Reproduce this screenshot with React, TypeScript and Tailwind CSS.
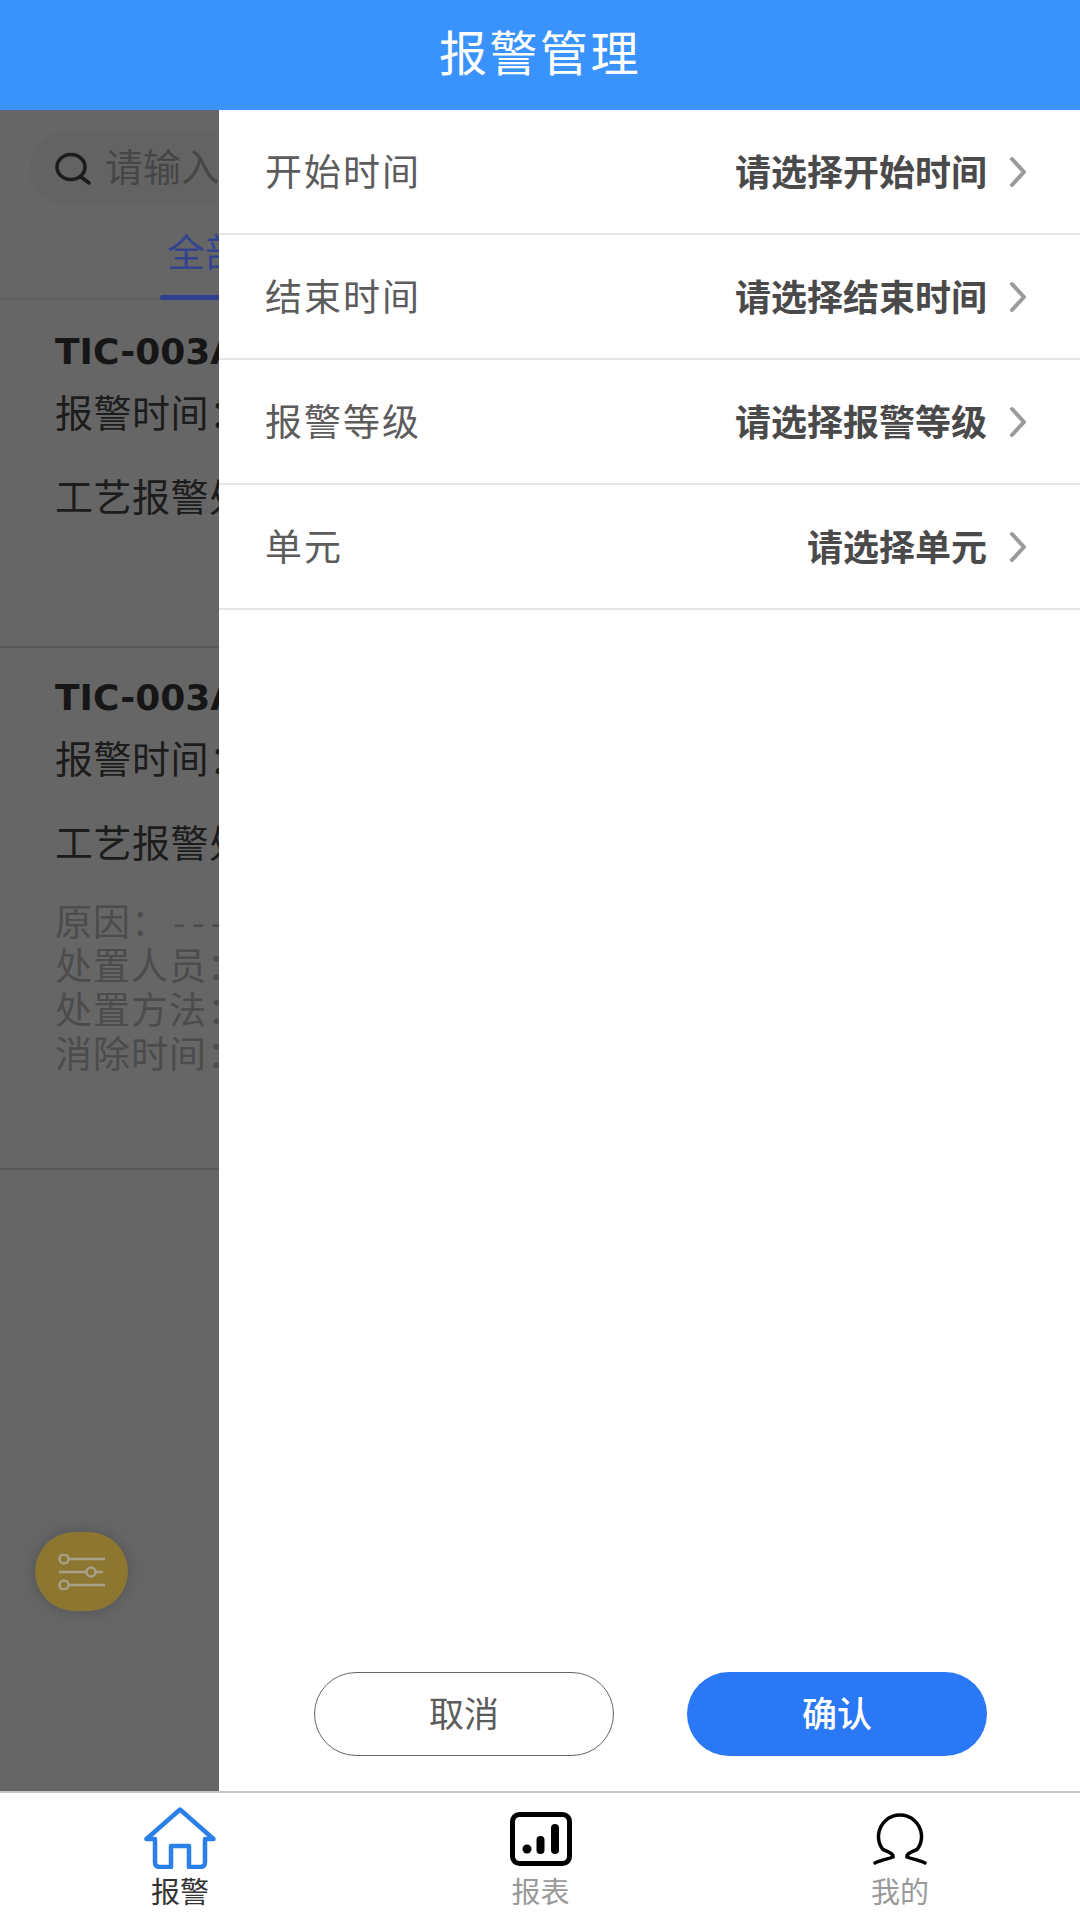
import React from "react";

const cjk = "font-['Noto_Sans_CJK_SC','Noto_Sans',sans-serif]";

const filters = [
  { label: "开始时间", hint: "请选择开始时间" },
  { label: "结束时间", hint: "请选择结束时间" },
  { label: "报警等级", hint: "请选择报警等级" },
  { label: "单元", hint: "请选择单元" },
];

const HomeIcon = () => (
  <svg width="72" height="62" viewBox="0 0 72 62" fill="none" stroke="#2b80e8" strokeWidth="4.5" strokeLinejoin="round" strokeLinecap="round">
    <path d="M36 2.5 L2.5 32 H11 V55 Q11 60 16 60 H27 V39 H45 V60 H56 Q61 60 61 55 V32 H69.5 Z" />
  </svg>
);

const ChartIcon = () => (
  <svg width="62" height="54" viewBox="0 0 62 54" fill="none">
    <rect x="2.5" y="2.5" width="57" height="49" rx="7" stroke="#000" strokeWidth="5" />
    <circle cx="17" cy="37" r="4.5" fill="#000" />
    <rect x="26.5" y="24" width="8" height="18" rx="4" fill="#000" />
    <rect x="41" y="12" width="8" height="30" rx="4" fill="#000" />
  </svg>
);

const UserIcon = () => (
  <svg width="54" height="52" viewBox="0 0 54 52" fill="none" stroke="#000" strokeWidth="3.5" strokeLinecap="round">
    <path d="M2 50 C8 47 15 46 20 44 C21 40 14 39 9.5 36 A21.5 21.5 0 1 1 44.5 36 C40 39 33 40 34 44 C39 46 46 47 52 50" />
  </svg>
);

const SlidersIcon = () => (
  <svg width="50" height="36" viewBox="0 0 50 36" fill="none" stroke="#a8a08a" strokeWidth="2.5">
    <path d="M12 5 H48" />
    <circle cx="7" cy="5" r="4.5" />
    <path d="M2 18 H29 M39 18 H46" />
    <circle cx="34" cy="18" r="4.5" />
    <path d="M12 31 H48" />
    <circle cx="7" cy="31" r="4.5" />
  </svg>
);

const SearchIcon = () => (
  <svg width="36" height="34" viewBox="0 0 36 34" fill="none" stroke="#1c1c1c" strokeWidth="3.5" strokeLinecap="round">
    <ellipse cx="16" cy="15" rx="14" ry="12.5" />
    <path d="M26 25 L34 31" />
  </svg>
);

const Chevron = () => (
  <svg width="18" height="32" viewBox="0 0 18 32" fill="none" stroke="#9a9a9a" strokeWidth="4" strokeLinecap="round" strokeLinejoin="round" className="mr-[2px] ml-[22px]">
    <path d="M3 3 L15 16 L3 29" />
  </svg>
);

const AlarmHead = ({ top }: { top: string }) => (
  <>
    <div className={`${top} font-['DejaVu_Sans',sans-serif] text-[36px] leading-[42px] font-bold text-[#161616]`}>TIC-003A</div>
    <div className="mt-[17px] text-[38px] leading-[42px] tracking-[0.5px] text-[#1c1c1c]">报警时间：</div>
    <div className="mt-[42px] text-[38px] leading-[42px] tracking-[0.5px] text-[#1c1c1c]">工艺报警处置</div>
  </>
);

export default function App() {
  return (
    <div className={`flex h-[1920px] w-[1080px] flex-col overflow-hidden bg-white ${cjk}`}>
      <header className="flex h-[110px] shrink-0 items-center justify-center bg-[#3a92fd] pb-[11px] text-[48px] tracking-[2.5px] text-white">
        报警管理
      </header>

      <main className="relative flex-1 overflow-hidden bg-[#666666] whitespace-nowrap">
        {/* dimmed page under the drawer */}
        <div className="mx-[29px] mt-[22px] flex h-[73px] items-center rounded-full bg-[#636363] pl-[26px]">
          <SearchIcon />
          <span className="mb-[8px] ml-[14px] text-[38px] text-[#464646]">请输入</span>
        </div>
        <div className="relative h-[95px] border-b-2 border-[#5f5f5f]">
          <span className="absolute top-[20px] left-[167px] text-[38px] leading-[50px] text-[#33448f]">全部</span>
          <div className="absolute bottom-[-2px] left-[160px] h-[5px] w-[100px] rounded-full bg-[#2f4090]" />
        </div>
        <div className="h-[348px] border-b-2 border-[#585858] pl-[55px]">
          <AlarmHead top="pt-[31px]" />
        </div>
        <div className="h-[522px] border-b-2 border-[#585858] pl-[55px]">
          <AlarmHead top="pt-[29px]" />
          <div className="mt-[36px] text-[37px] leading-[44px] tracking-[1px] text-[#4c4c4c]">
            <div>原因：<span className="ml-[4px] tracking-[6px]">---</span></div>
            <div>处置人员：</div>
            <div>处置方法：</div>
            <div>消除时间：</div>
          </div>
        </div>

        <div className="absolute top-[1422px] left-[35px] flex h-[79px] w-[93px] items-center justify-center rounded-full bg-[#8d7730] shadow-[0_0_14px_rgba(70,70,80,0.6)]">
          <SlidersIcon />
        </div>

        {/* filter drawer */}
        <aside className="absolute inset-y-0 right-0 left-[219px] flex flex-col bg-white">
          {filters.map((f) => (
            <div key={f.label} className="flex h-[125px] items-center justify-between border-b-2 border-[#e6e6e6] pr-[51px] pl-[46px]">
              <span className="pb-[1px] text-[37px] tracking-[2px] text-[#5c5c5c]">{f.label}</span>
              <span className="flex items-center">
                <span className="pb-[3px] text-[36px] font-bold text-[#4a4a4a]">{f.hint}</span>
                <Chevron />
              </span>
            </div>
          ))}
          <div className="mt-auto mb-[35px] flex justify-center gap-[73px] pl-[2px]">
            <button className="h-[84px] w-[300px] rounded-full border border-[#666666] bg-white pb-[4px] text-[35px] text-[#5c5c5c]">取消</button>
            <button className="h-[84px] w-[300px] rounded-full bg-[#2b78f6] pb-[4px] text-[35px] font-medium text-white">确认</button>
          </div>
        </aside>
      </main>

      <nav className="grid h-[129px] shrink-0 grid-cols-3 border-t-2 border-[#c4c4c4] bg-white">
        <div className="flex flex-col items-center pt-[14px]">
          <HomeIcon />
          <span className="mt-[3px] text-[29px] leading-[36px] text-[#333333]">报警</span>
        </div>
        <div className="flex flex-col items-center pt-[19px] pl-[1px]">
          <ChartIcon />
          <span className="mt-[6px] text-[29px] leading-[36px] text-[#999999]">报表</span>
        </div>
        <div className="flex flex-col items-center pt-[20px]">
          <UserIcon />
          <span className="mt-[7px] text-[29px] leading-[36px] text-[#999999]">我的</span>
        </div>
      </nav>
    </div>
  );
}
